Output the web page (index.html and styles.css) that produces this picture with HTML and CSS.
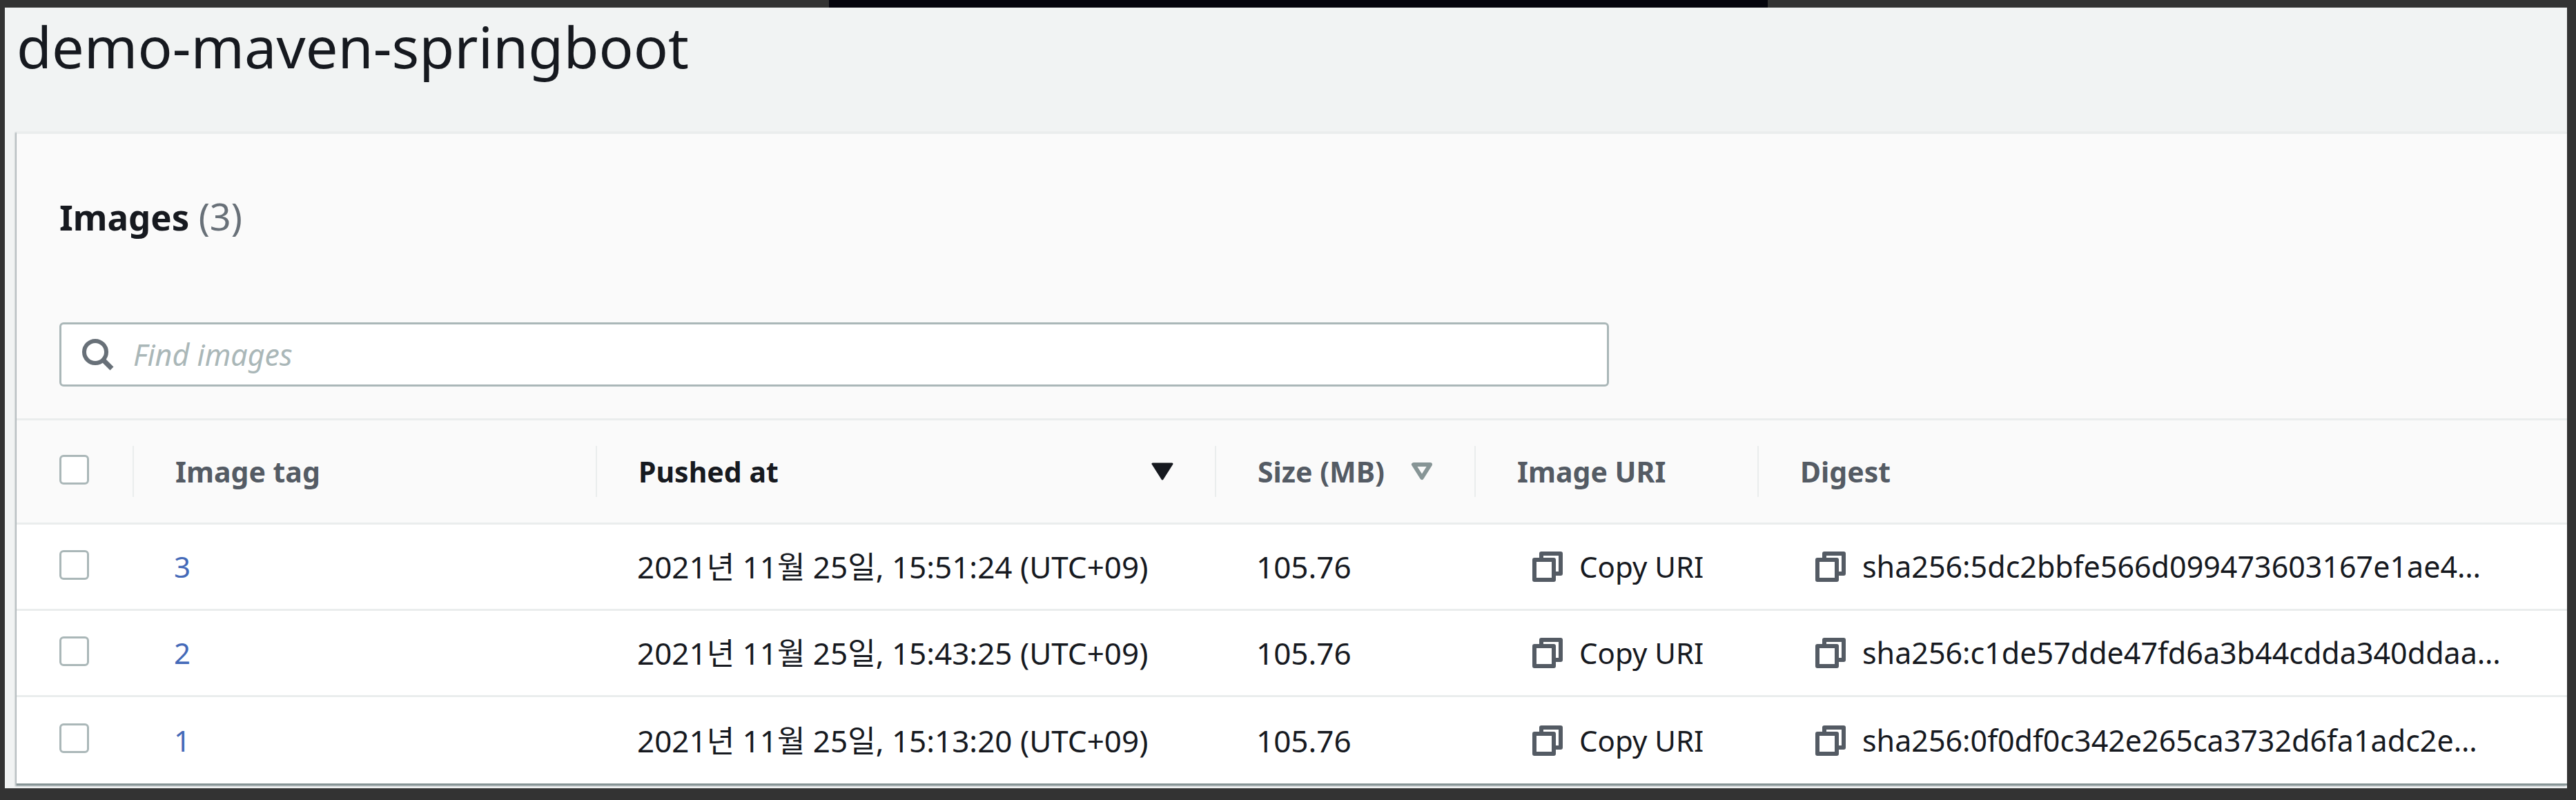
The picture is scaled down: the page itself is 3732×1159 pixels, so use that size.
FILE: index.html
```
<!DOCTYPE html>
<html lang="ko">

<head>
    <meta charset="UTF-8">
    <title>demo-maven-springboot</title>
    <link rel="stylesheet" href="styles.css">
</head>

<body>
    <!-- icon shapes used in every row -->
    <svg class="sprite" aria-hidden="true">
        <symbol id="icon-copy" viewBox="0 0 44 44">
            <path d="M13 12V3H41V32H32" fill="none" stroke="currentColor" stroke-width="6" stroke-linejoin="round" />
            <rect x="3" y="12" width="28" height="29" fill="none" stroke="currentColor" stroke-width="6" stroke-linejoin="round" />
        </symbol>
    </svg>

    <div class="topbar"><span class="topbar-tab"></span></div>

    <main class="page">
        <h1>demo-maven-springboot</h1>

        <section class="panel">
            <div class="panel-header">
                <h2>Images <span class="count">(3)</span></h2>
                <label class="search">
                    <svg class="search-icon" viewBox="0 0 46 46" aria-hidden="true">
                        <circle cx="19" cy="19" r="16" fill="none" stroke="currentColor" stroke-width="6" />
                        <path d="M30 30L43 43" stroke="currentColor" stroke-width="7" />
                    </svg>
                    <input type="text" placeholder="Find images" aria-label="Find images">
                </label>
            </div>

            <table>
                <colgroup>
                    <col class="col-check">
                    <col class="col-tag">
                    <col class="col-pushed">
                    <col class="col-size">
                    <col class="col-uri">
                    <col>
                </colgroup>
                <thead>
                    <tr>
                        <th><input type="checkbox" aria-label="Select all images"></th>
                        <th><div class="head">Image tag</div></th>
                        <th>
                            <button class="head sorted">Pushed at
                                <svg class="sort" viewBox="0 0 32 26" aria-hidden="true"><path d="M2 2H30L16 24Z" fill="currentColor" stroke="currentColor" stroke-width="3" stroke-linejoin="round" /></svg>
                            </button>
                        </th>
                        <th>
                            <button class="head">Size (MB)
                                <svg class="sort" viewBox="0 0 32 26" aria-hidden="true"><path d="M4 3H28L16 22Z" fill="none" stroke="currentColor" stroke-width="6" stroke-linejoin="round" /></svg>
                            </button>
                        </th>
                        <th><div class="head">Image URI</div></th>
                        <th><div class="head">Digest</div></th>
                    </tr>
                </thead>
                <tbody>
                    <tr>
                        <td><input type="checkbox" aria-label="Select image 3"></td>
                        <td><a href="#">3</a></td>
                        <td class="value">2021년 11월 25일, 15:51:24 (UTC+09)</td>
                        <td class="value">105.76</td>
                        <td><button class="copy"><svg class="copy-icon" aria-hidden="true"><use href="#icon-copy" /></svg>Copy URI</button></td>
                        <td><button class="copy digest"><svg class="copy-icon" aria-hidden="true"><use href="#icon-copy" /></svg>sha256:5dc2bbfe566d099473603167e1ae4…</button></td>
                    </tr>
                    <tr>
                        <td><input type="checkbox" aria-label="Select image 2"></td>
                        <td><a href="#">2</a></td>
                        <td class="value">2021년 11월 25일, 15:43:25 (UTC+09)</td>
                        <td class="value">105.76</td>
                        <td><button class="copy"><svg class="copy-icon" aria-hidden="true"><use href="#icon-copy" /></svg>Copy URI</button></td>
                        <td><button class="copy digest"><svg class="copy-icon" aria-hidden="true"><use href="#icon-copy" /></svg>sha256:c1de57dde47fd6a3b44cdda340ddaa…</button></td>
                    </tr>
                    <tr>
                        <td><input type="checkbox" aria-label="Select image 1"></td>
                        <td><a href="#">1</a></td>
                        <td class="value">2021년 11월 25일, 15:13:20 (UTC+09)</td>
                        <td class="value">105.76</td>
                        <td><button class="copy"><svg class="copy-icon" aria-hidden="true"><use href="#icon-copy" /></svg>Copy URI</button></td>
                        <td><button class="copy digest"><svg class="copy-icon" aria-hidden="true"><use href="#icon-copy" /></svg>sha256:0f0df0c342e265ca3732d6fa1adc2e…</button></td>
                    </tr>
                </tbody>
            </table>
        </section>
    </main>
</body>

</html>
```
FILE: styles.css
```
*{
    box-sizing: border-box;
}

body{
    margin: 0;
    padding: 0 13px 16px 7px;
    background: #333;
    color: #16191f;
    font-family: "Noto Sans", "Noto Sans CJK KR", sans-serif;
    font-size: 42px;
    line-height: 58px;
}

.sprite{
    display: none;
}

/* strip above the page */
.topbar{
    display: grid;
    grid-template-columns: 1194fr 1360fr 1158fr;
    height: 11px;
}

.topbar-tab{
    grid-column: 2;
    background: #05050d;
}

.page{
    background: #f1f3f3;
    padding: 0 0 4px 17px;
}

h1{
    margin: 0;
    padding-bottom: 68px;
    font-size: 83px;
    font-weight: 400;
    line-height: 112px;
}

.panel{
    background: #fff;
    border-top: 3px solid #eaeded;
    border-bottom: 3px solid #879596;
    box-shadow: -2px 1px 2px rgba(0, 28, 36, 0.3);
}

.panel-header{
    background: #fafafa;
    padding: 82px 62px 46px;
}

h2{
    margin: 0 0 116px;
    font-size: 51px;
    font-weight: 700;
    line-height: 74px;
}

.count{
    color: #687078;
    font-size: 54px;
    font-weight: 400;
}

.search{
    display: flex;
    align-items: center;
    gap: 28px;
    width: 2245px;
    max-width: 100%;
    height: 93px;
    padding: 0 30px;
    background: #fff;
    border: 3px solid #aab7b8;
    border-radius: 6px;
}

.search-icon{
    width: 46px;
    height: 46px;
    flex: none;
    color: #687078;
}

.search input{
    flex: 1;
    border: 0;
    padding: 0;
    outline: none;
    background: none;
    color: inherit;
    font: inherit;
    font-size: 43px;
}

.search input::placeholder{
    color: #aab7b8;
    font-style: italic;
    opacity: 1;
}

table{
    width: 100%;
    table-layout: fixed;
    border-collapse: separate;
    border-spacing: 0;
}

.col-check{
    width: 168px;
}

.col-tag{
    width: 671px;
}

.col-pushed{
    width: 897px;
}

.col-size{
    width: 376px;
}

.col-uri{
    width: 410px;
}

th{
    height: 154px;
    padding: 0;
    background: #fafafa;
    border-top: 3px solid #eaeded;
    border-bottom: 3px solid #eaeded;
    color: #545b64;
    font-size: 41px;
    text-align: left;
}

td{
    height: 125px;
    padding: 0 0 0 60px;
    border-bottom: 3px solid #eaeded;
    white-space: nowrap;
}

tbody tr:last-child td{
    border-bottom: 0;
}

/* tick boxes sit a little above the text line */
th:first-child,
td:first-child{
    padding-left: 62px;
    padding-bottom: 6px;
}

/* column title with the short divider on its left */
.head{
    display: flex;
    align-items: center;
    justify-content: space-between;
    width: 100%;
    height: 74px;
    padding: 0 60px;
    border: 0;
    border-left: 2px solid #eaeded;
    background: none;
    color: inherit;
    font: inherit;
    font-weight: 700;
    white-space: nowrap;
}

.sorted{
    color: #16191f;
}

.sort{
    width: 32px;
    height: 26px;
    flex: none;
    color: #879596;
}

.sorted .sort{
    color: #16191f;
}

input[type="checkbox"]{
    appearance: none;
    display: block;
    width: 43px;
    height: 43px;
    margin: 0;
    background: #fff;
    border: 3px solid #aab7b8;
    border-radius: 6px;
}

a{
    color: #4469b8;
    text-decoration: none;
}

.value{
    font-size: 44px;
}

.copy{
    display: flex;
    align-items: center;
    gap: 24px;
    padding: 0 0 0 24px;
    border: 0;
    background: none;
    color: inherit;
    font: inherit;
    white-space: nowrap;
}

.digest{
    font-size: 43px;
}

.copy-icon{
    width: 44px;
    height: 44px;
    flex: none;
    color: #545b64;
}
```
